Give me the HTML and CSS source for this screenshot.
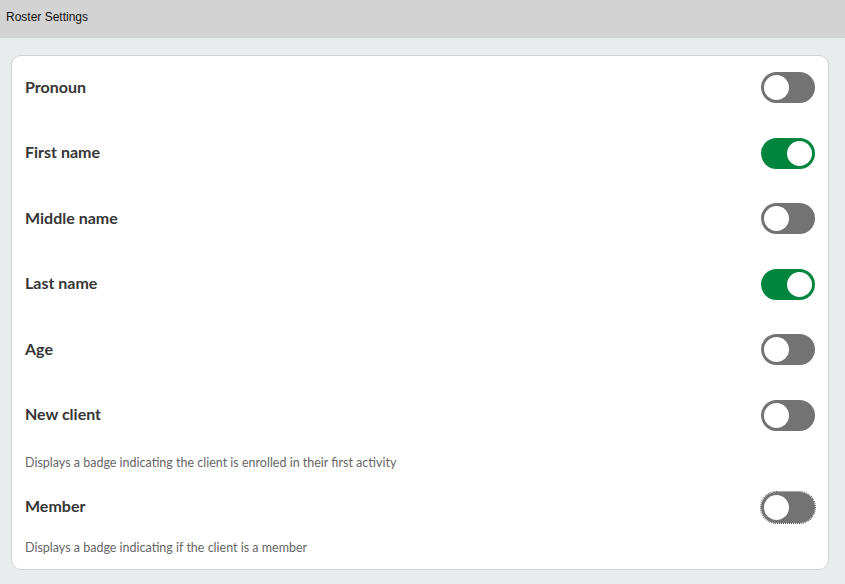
FILE: index.html
```html
<!DOCTYPE html>
<html>
<head>
<meta charset="utf-8">
<link rel="stylesheet" href="styles.css">
</head>
<body>
<header class="topbar">Roster Settings</header>
<main class="content">
  <section class="card">
    <div class="setting">
      <div class="row"><span class="label">Pronoun</span><span class="toggle"></span></div>
    </div>
    <div class="setting">
      <div class="row"><span class="label">First name</span><span class="toggle on"></span></div>
    </div>
    <div class="setting">
      <div class="row"><span class="label">Middle name</span><span class="toggle"></span></div>
    </div>
    <div class="setting">
      <div class="row"><span class="label">Last name</span><span class="toggle on"></span></div>
    </div>
    <div class="setting">
      <div class="row"><span class="label">Age</span><span class="toggle"></span></div>
    </div>
    <div class="setting">
      <div class="row"><span class="label">New client</span><span class="toggle"></span></div>
      <p class="desc first-desc">Displays a badge indicating the client is enrolled in their first activity</p>
    </div>
    <div class="setting after-desc">
      <div class="row"><span class="label">Member</span><span class="toggle focused"></span></div>
      <p class="desc">Displays a badge indicating if the client is a member</p>
    </div>
  </section>
</main>
</body>
</html>
```
FILE: styles.css
```css
html, body {
  margin: 0;
  padding: 0;
  background: #e9ecec;
  height: 100%;
}
body {
  font-family: Lato, "Open Sans", sans-serif;
  color: #333;
}
.topbar {
  height: 38px;
  box-sizing: border-box;
  background: #d3d3d3;
  font-family: "Liberation Sans", Arial, sans-serif;
  font-size: 12px;
  line-height: 34px;
  padding-left: 6px;
  color: #111;
}
.content {
  padding: 17px 16px 0 11px;
}
.card {
  background: #fff;
  border: 1px solid #cfd2d2;
  border-radius: 10px;
  padding: 16px 13px 13px 13px;
}
.setting + .setting {
  margin-top: 34.6px;
}
.setting.after-desc {
  margin-top: 21px;
}
.row {
  display: flex;
  align-items: center;
  justify-content: space-between;
  height: 31px;
}
.label {
  font-size: 16px;
  font-weight: 700;
  color: #363636;
  padding-bottom: 3px;
}
.toggle {
  position: relative;
  width: 54px;
  height: 31px;
  border-radius: 16px;
  background: #737373;
  flex: none;
}
.toggle::after {
  content: "";
  position: absolute;
  top: 3px;
  left: 3px;
  width: 25px;
  height: 25px;
  border-radius: 50%;
  background: #fff;
}
.toggle.on {
  background: #00853e;
}
.toggle.on::after {
  left: 26px;
}
.toggle.focused {
  outline: 1px dotted #555;
  outline-offset: 0;
}
.desc {
  margin: 17px 0 0;
  font-size: 12.5px;
  line-height: 16px;
  color: #666;
}
.desc.first-desc {
  margin-top: 24px;
}
```
